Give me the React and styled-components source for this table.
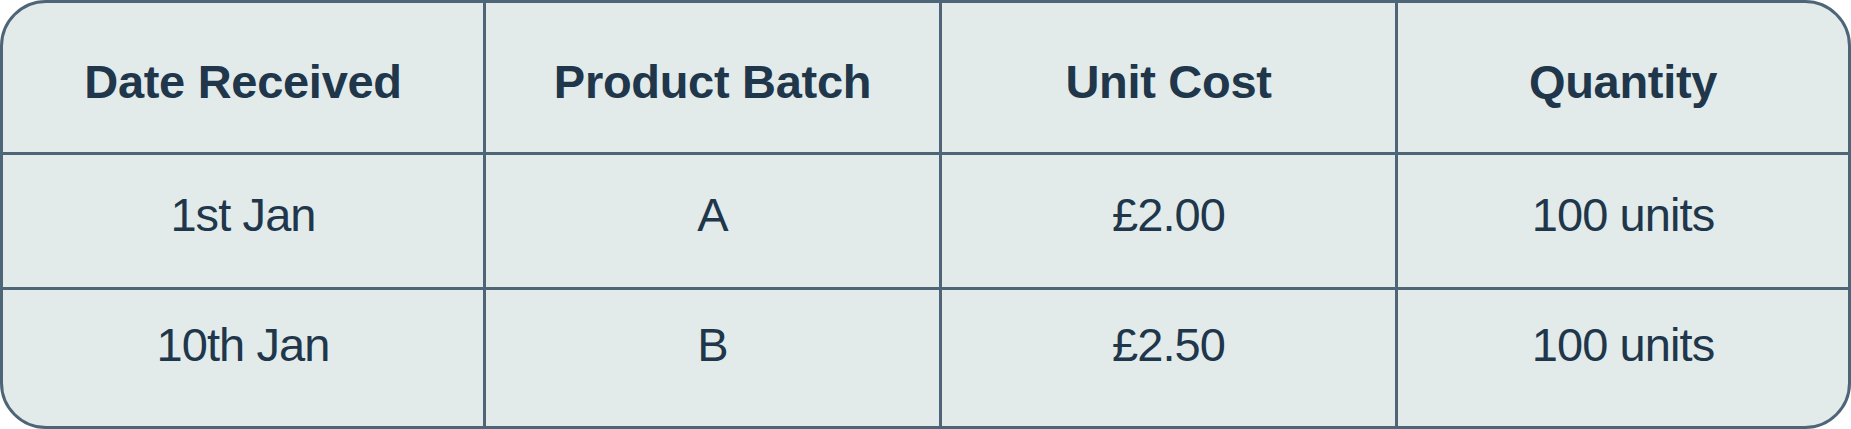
import React from "react";
import styled, { createGlobalStyle } from "styled-components";

const GlobalStyle = createGlobalStyle`
  html, body {
    margin: 0;
    padding: 0;
    background: #ffffff;
  }
  * {
    box-sizing: border-box;
  }
`;

const Table = styled.div`
  width: 1851px;
  height: 429px;
  display: grid;
  grid-template-columns: 483px 456px 456px 1fr;
  grid-template-rows: 152px 135px 136px;
  background: #e2ebea;
  border: 3px solid #4e6578;
  border-radius: 46px;
  overflow: hidden;
  font-family: "Liberation Sans", Arial, sans-serif;
  color: #20364b;
`;

const Cell = styled.div`
  display: flex;
  justify-content: center;
  align-items: flex-start;
  padding-top: ${(p) => p.$padTop}px;
  border-right: ${(p) => (p.$lastCol ? "none" : "3px solid #4e6578")};
  border-bottom: ${(p) => (p.$lastRow ? "none" : "3px solid #4e6578")};
  font-size: 47px;
  line-height: 1;
  font-weight: ${(p) => (p.$head ? 700 : 400)};
  letter-spacing: ${(p) => (p.$head ? "-0.3px" : "-0.9px")};
  white-space: nowrap;
`;

const headers = ["Date Received", "Product Batch", "Unit Cost", "Quantity"];
const rows = [
  ["1st Jan", "A", "£2.00", "100 units"],
  ["10th Jan", "B", "£2.50", "100 units"],
];
const rowPad = [36, 31];

export default function App() {
  return (
    <>
      <GlobalStyle />
      <Table>
        {headers.map((h, i) => (
          <Cell key={h} $head $padTop={55} $lastCol={i === headers.length - 1}>
            {h}
          </Cell>
        ))}
        {rows.map((row, r) =>
          row.map((val, c) => (
            <Cell
              key={`${r}-${c}`}
              $padTop={rowPad[r]}
              $lastCol={c === row.length - 1}
              $lastRow={r === rows.length - 1}
            >
              {val}
            </Cell>
          ))
        )}
      </Table>
    </>
  );
}
